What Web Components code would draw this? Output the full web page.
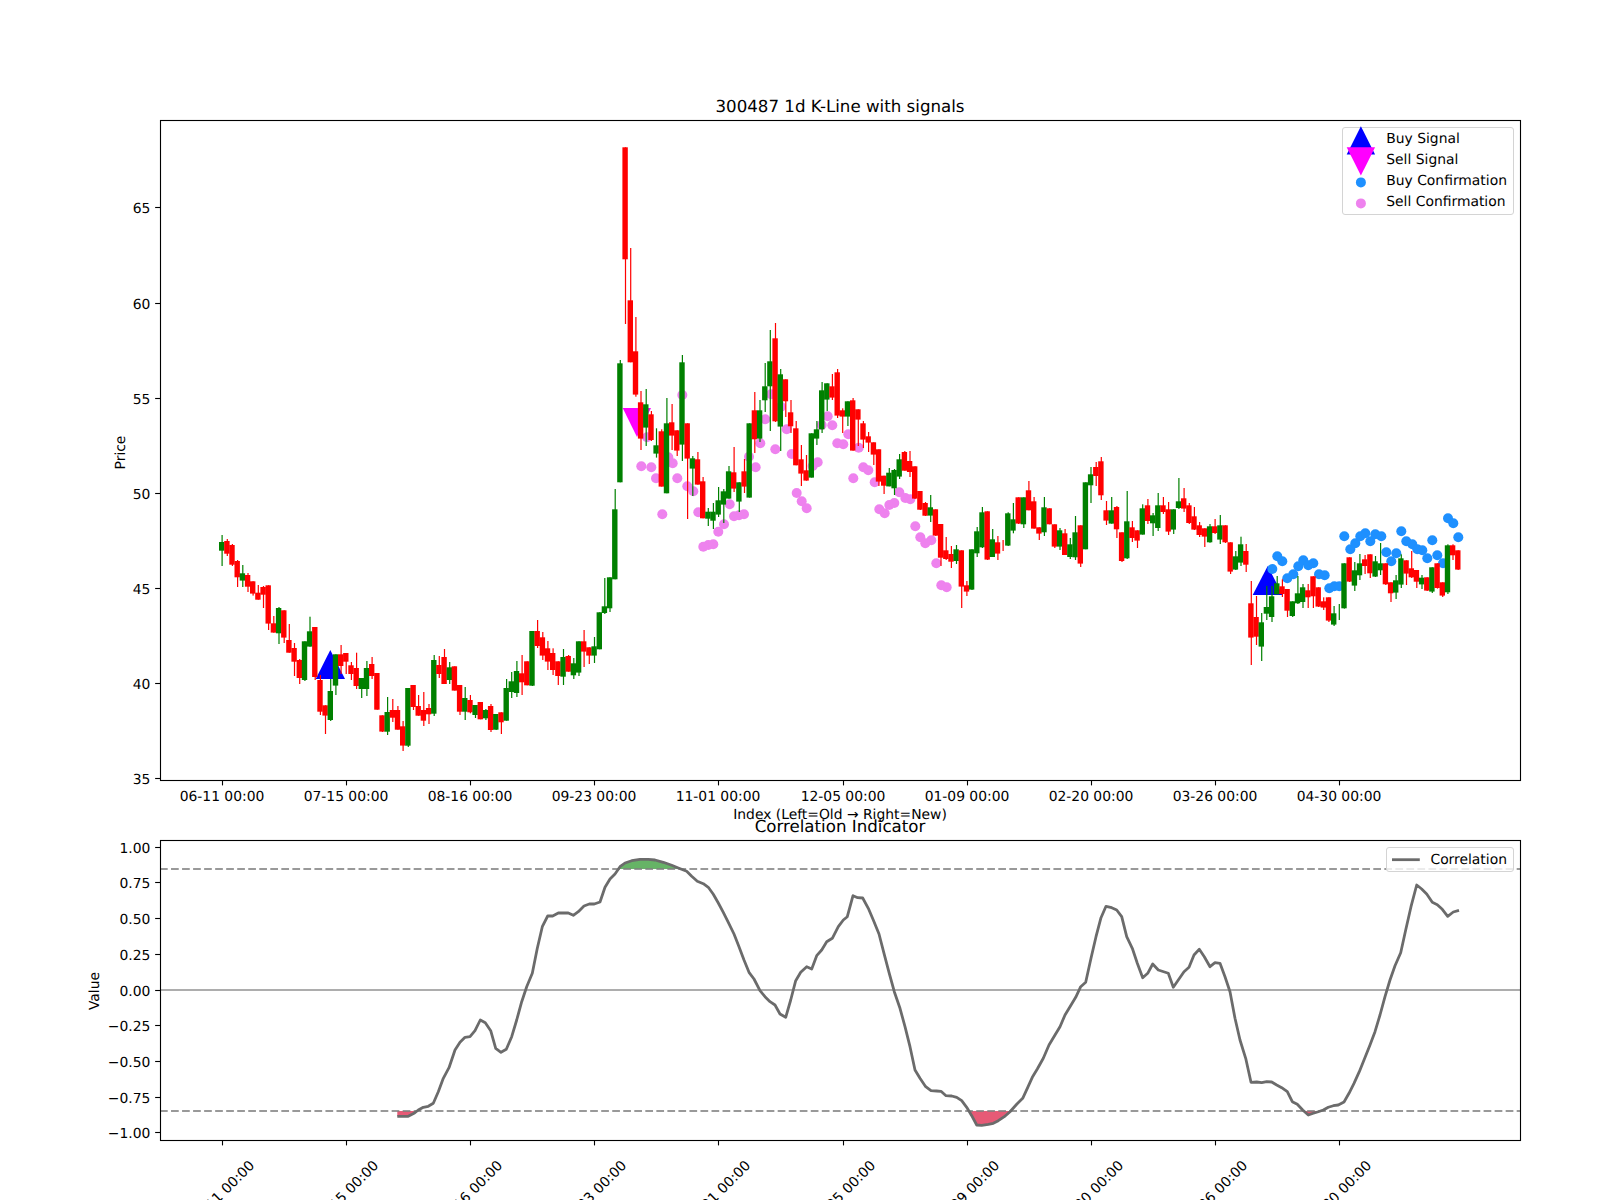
<!DOCTYPE html>
<html>
<head>
<meta charset="utf-8">
<title>300487 1d K-Line with signals</title>
<style>
	html, body { margin: 0; background: #fff; overflow: hidden; }
	body { font-family: "DejaVu Sans", sans-serif; color: #000; }
</style>
</head>
<body>
<mpl-figure>
	<kline-axes>
		<chart-legend slot="legend">
			<legend-item marker="up" color="#0000ff">Buy Signal</legend-item>
			<legend-item marker="down" color="#ff00ff">Sell Signal</legend-item>
			<legend-item marker="dot" color="#1e90ff">Buy Confirmation</legend-item>
			<legend-item marker="dot" color="#ee82ee">Sell Confirmation</legend-item>
		</chart-legend>
	</kline-axes>
	<corr-axes>
		<chart-legend slot="legend" style="padding-top: 2px; padding-bottom: 0;">
			<legend-item marker="line" color="#6b6b6b">Correlation</legend-item>
		</chart-legend>
	</corr-axes>
</mpl-figure>

<script>
// candle rows: colour, body top, body bottom, wick top, wick bottom
// y values are read at 3x, each block has its own y origin
const CANDLE_BLOCKS = [
	[480, `g 186 212 165 258
r 183 221 177 228
r 195 254 192 258
r 243 292 240 321
g 280 302 255 321
r 285 320 279 336
r 304 341 304 347
r 338 359 315 359
r 321 344 318 384
r 316 431 316 450
r 430 458 408 458
g 384 460 381 492
r 391 473 391 489
r 480 518 432 518
r 504 545 489 588
r 540 594 537 612
g 484 600 484 603
g 454 500 410 500
r 441 591 441 600
r 600 695 585 705
r 676 707 676 762
g 633 720 597 723
g 523 617 523 645
r 523 558 495 582
r 519 545 519 582
r 556 582 546 600
r 564 618 518 627
g 594 627 594 654
g 564 627 543 648
r 552 588 531 597
r 579 689 579 689
r 706 755 706 756
g 696 755 651 765
r 690 713 657 726
r 690 749 678 749
r 739 797 723 813
g 624 797 624 801
r 615 681 615 690
r 678 707 645 707
r 690 722 636 738
r 684 703 672 732
g 540 701 525 708
r 555 582 528 594
r 531 612 507 612
g 562 600 546 612`],
	[480, `r 559 632 559 632
r 615 695 615 705
g 654 695 621 720
r 660 697 645 700
g 675 705 675 714
r 666 718 666 718
g 690 715 687 720
r 678 750 672 756
g 702 749 702 750
r 697 727 697 762
g 624 722 597 722
g 604 636 576 654
g 573 639 543 651
r 580 607 525 645
r 544 616 544 616
g 453 617 453 618
r 453 498 420 504
r 472 527 456 540
r 505 545 483 570
r 519 570 505 585
r 544 588 544 615
g 531 590 507 615
r 528 575 525 575
g 550 586 534 597
g 484 578 484 588
r 484 515 450 561
r 502 527 502 552
g 499 527 471 549
g 397 508 397 508
g 379 399 294 402
g 292 385 292 396
g 88 298 27 298`],
	[130, `g 700 1057 690 1057
r 52 388 52 582
r 511 697 354 697
r 664 794 561 800
r 817 926 783 960
g 823 893 777 948
r 853 930 843 933
g 946 971 895 983
r 904 1070 898 1070
g 880 1090 804 1090
r 877 917 822 960
r 901 962 901 978
g 697 944 675 993
r 880 986 880 1167
g 985 1016 978 1098
r 988 1064 966 1064
r 1054 1165 1041 1165
g 1145 1166 1134 1188
g 1145 1172 1119 1197
g 1111 1154 1071 1161
g 1084 1124 1077 1179
g 1024 1106 1008 1106
r 1027 1076 951 1086
g 1057 1115 1057 1146
r 1024 1070 987 1089
g 880 1103 880 1103
r 841 928 786 969
g 841 926 810 936
g 769 811 699 846
g 694 769 600 903
r 625 874 579 876
g 733 890 717 963
r 748 814 748 861
r 847 889 810 909
r 895 1006 873 1006
r 988 1031 945 1068
r 1021 1052 975 1052
g 910 1043 910 1043
g 898 926 873 945
g 781 898 756 909
g 760 809 760 843
r 769 803 732 810
r 727 857 717 864
r 841 860 835 909
g 814 860 814 888
r 811 962 804 962
r 838 869 838 948
r 880 929 873 954
r 919 938 906 966
r 937 974 937 1005
r 958 1055 958 1068`],
	[320, `r 467 497 467 522
g 458 499 444 499
g 450 505 447 525
g 418 470 402 477
r 396 452 393 452
r 423 456 393 471
r 439 536 439 537
r 513 569 513 570
r 549 587 546 588
g 562 587 525 606
r 568 647 568 648
r 612 713 612 738
r 691 717 651 720
r 702 725 678 744
g 688 723 675 732
r 691 800 691 864
r 796 815 783 828
g 688 809 688 810
g 634 700 621 711
g 577 682 561 684
r 574 719 574 720
g 658 711 627 711
r 667 701 648 720
r 676 676 660 693
g 580 677 577 678
g 598 632 549 640
r 532 611 532 612
g 532 613 532 624
r 511 571 483 571
r 544 626 531 626
r 622 641 622 660
g 562 637 531 648
r 565 613 565 613
r 613 680 613 684
g 631 680 624 690
r 640 705 627 705
g 673 711 654 717
g 637 712 588 720`],
	[440, `r 256 371 256 381
g 127 328 127 328
g 103 136 81 189
r 81 108 66 138
r 64 166 51 180
r 211 242 183 255
g 211 251 171 251
r 201 268 198 294
r 277 363 277 366
g 244 355 153 357
r 262 294 243 306
r 271 302 271 324
g 205 284 193 284
r 196 243 177 252
g 226 250 219 288
g 196 264 159 273
r 196 216 171 222
r 208 275 186 285
g 208 269 208 282
g 184 204 114 207
r 175 206 144 216
r 196 249 189 252
r 229 269 201 270
r 256 285 246 291
r 265 290 265 321
g 259 307 252 308
r 259 279 237 282
g 256 299 225 312
r 256 307 256 309
r 307 395 307 402
g 349 389 333 390`],
	[490, `g 163 218 140 228
r 183 224 162 246
r 340 443 273 525
r 381 440 318 465
g 397 470 369 513
g 351 371 288 390
g 319 381 288 396
g 280 313 258 313
r 289 312 268 321
r 297 362 297 381
g 334 378 334 381
g 310 340 258 342
g 292 336 282 354
r 301 322 282 354
r 259 319 259 354
r 292 350 292 351
r 334 353 322 360
r 322 392 322 396
g 370 404 348 408
g 366 366 342 390
g 220 355 220 356
r 202 275 202 276
g 241 287 216 303
g 220 256 192 270
r 208 228 195 252
r 193 250 193 264
g 214 260 198 261
g 220 241 159 255
r 220 283 220 285
r 277 310 277 336
g 271 308 255 327
g 205 284 193 294
r 211 251 211 285
r 235 262 183 264
r 240 275 240 294
g 263 283 255 297
r 262 302 262 303
g 232 305 232 309
r 220 294 220 296
r 277 317 277 321
g 166 307 163 312
r 166 196 163 210
r 181 239 181 240`]
];

// circles, as x,y at 3x from the same crops
const SELL_DOTS = [
	[580, 130, `307,795 184,1009 214,1012 228,1045 201,922 265,982 278,1000 292,1045 322,1069 340,1084 247,1153 355,1147 449,1123 432,1183 462,1159 477,1156 492,1153 415,1205 507,980 527,1012 541,940 556,868 573,793 586,958 603,830`],
	[450, 480, `775,195 790,193 760,200`],
	[780, 320, `20,328 35,402 50,519 65,544 80,565 98,438 113,427 125,315 143,289 157,316 172,370 190,373 205,343 220,475 236,383 250,442 265,451 284,487 298,568 314,580 328,555 343,549 358,517 376,534 391,538 406,619 421,652 436,670 454,661 469,730 484,796 500,802`]
];
const BUY_DOTS = [
	[1240, 490, `97,237 112,199 127,214 142,265 160,253 175,229 190,211 205,226 220,220 237,253 254,256 268,295 283,289 298,289 313,139 331,178 346,160 361,139 376,130 391,154 406,133 424,139 439,187 454,214 469,190 484,124 499,154 517,163 532,178 547,181 562,205 577,151 592,196 609,220 624,85 640,100 655,142`]
];

// correlation line in the three lower crops
const CORR_LINE = [
	[60, 770, `1012,1039 1045,1039 1062,1030 1075,1020 1090,1012 1105,1009 1120,1000 1135,965 1150,925 1167,893 1185,840 1200,817 1215,802 1230,800 1245,782 1261,750 1276,758 1292,782 1307,835 1323,847 1339,838 1355,800 1370,750 1385,695 1400,650 1417,610 1432,535 1447,470 1463,438 1478,438 1495,429`],
	[560, 770, `25,429 40,436 55,425 72,408 88,402 103,402 120,396 135,352 150,327 165,312 180,290 195,279 215,272 240,268 265,268 285,270 310,277 335,286 355,294 380,304 395,319 412,334 430,341 445,352 460,373 475,399 490,427 505,457 522,492 537,530 552,570 567,607 582,627 600,662 615,680 630,695 645,705 660,732 677,742 692,690 707,632 722,607 740,590 755,597 770,557 785,540 800,515 817,505 835,470 850,450 862,440 879,377 893,383 908,384 925,415 940,450 957,492 972,550 987,607 1003,665 1020,715 1035,770 1050,830 1065,900 1080,925 1097,950 1113,962 1130,963 1143,964 1158,977 1175,978 1190,982 1205,992 1220,1012 1235,1037 1250,1065 1265,1066 1285,1063 1300,1060 1315,1052 1333,1040 1350,1025 1370,1003 1388,985 1402,955 1417,922 1432,897 1450,865 1467,825 1485,795`],
	[1060, 770, `0,770 15,735 30,710 47,682 62,650 77,637 93,565 108,500 123,443 138,409 155,413 170,420 185,440 200,500 217,535 232,580 248,623 263,610 278,582 295,600 325,610 340,652 355,630 372,605 387,592 402,555 418,538 433,560 450,590 465,578 480,580 495,620 510,665 525,745 540,810 557,865 573,937 590,936 605,938 620,935 635,936 650,945 665,953 682,965 697,995 712,1003 728,1020 745,1035 760,1030 775,1025 790,1020 805,1012 820,1007 835,1005 852,996 867,970 882,940 898,905 913,868 930,825 945,785 960,735 975,680 990,630 1005,587 1022,548 1037,480 1053,410 1070,345 1085,357 1100,372 1117,397 1132,404 1147,418 1163,439 1180,426 1197,421`]
];

const X_LABELS = ["06-11 00:00", "07-15 00:00", "08-16 00:00", "09-23 00:00", "11-01 00:00", "12-05 00:00", "01-09 00:00", "02-20 00:00", "03-26 00:00", "04-30 00:00"];
const TICK_X = [222.5, 346.5, 470.5, 594.5, 718.5, 843.5, 967.5, 1091.5, 1215.5, 1339.5];
const x0 = 221.7, xStep = 5.172;

function readPoints(blocks) {
	let pts = [];
	for (const [ox, oy, text] of blocks) {
		for (const pair of text.trim().split(/\s+/)) {
			const [x, y] = pair.split(",").map(Number);
			pts.push([ox + x / 3, oy + y / 3]);
		}
	}
	return pts;
}

function dotsSvg(blocks, color) {
	return readPoints(blocks).map(([x, y]) =>
		`<circle cx="${x.toFixed(1)}" cy="${y.toFixed(1)}" r="5" fill="${color}"/>`).join("");
}

// shared frame: box, ticks and labels. The viewBox keeps figure coordinates.
class ChartAxes extends HTMLElement {
	constructor() {
		super();
		this.attachShadow({ mode: "open" });
	}
	render(box, content) {
		const [x, y, w, h] = box;
		this.shadowRoot.innerHTML = `<style>
			:host { display: block; position: relative; width: ${w}px; height: ${h}px; }
			svg { display: block; overflow: visible; }
			text { font-family: "DejaVu Sans", sans-serif; font-size: 13.89px; fill: #000; text-rendering: geometricPrecision; }
			.title { font-size: 16.67px; }
			.legend-slot { position: absolute; top: 7px; right: 6.5px; }
		</style>
		<svg width="${w}" height="${h}" viewBox="${x} ${y} ${w} ${h}">${content}
			<rect x="${x + 0.5}" y="${y + 0.5}" width="${w}" height="${h}" fill="none" stroke="#000" stroke-width="1.11"/>
		</svg>
		<div class="legend-slot"><slot name="legend"></slot></div>`;
	}
	tickMark(x1, y1, x2, y2) {
		return `<line x1="${x1}" y1="${y1}" x2="${x2}" y2="${y2}" stroke="#000" stroke-width="1.11"/>`;
	}
	yTicks(list, fmt, toY, left) {
		return list.map((v) => {
			const y = Math.floor(toY(v)) + 0.5;
			return this.tickMark(left - 4.86, y, left + 0.5, y) +
				`<text x="${left - 9.7}" y="${y + 5}" text-anchor="end">${fmt(v)}</text>`;
		}).join("");
	}
}

class KlineAxes extends ChartAxes {
	constructor() {
		super();
		// measured tick rows
		const priceY = { 35: 778, 40: 683, 45: 588, 50: 493, 55: 398, 60: 303, 65: 207 };

		let candles = "", i = 0;
		for (const [oy, rows] of CANDLE_BLOCKS) {
			for (const row of rows.split("\n")) {
				const parts = row.trim().split(" ");
				const [bt, bb, wt, wb] = parts.slice(1).map(Number);
				const fill = parts[0] == "g" ? "#008000" : "#ff0000";
				const x = x0 + xStep * i;
				const top = oy + bt / 3, bot = oy + bb / 3;
				candles += `<rect x="${(x - 0.2).toFixed(1)}" y="${(oy + wt / 3).toFixed(1)}" width="1.2" height="${((wb - wt) / 3).toFixed(1)}" fill="${fill}"/>`;
				// a few rows only have a wick
				if (bb > bt) {
					candles += `<rect x="${(x - 2.7).toFixed(1)}" y="${top.toFixed(1)}" width="5.4" height="${(bot - top).toFixed(1)}" fill="${fill}"/>`;
				}
				i++;
			}
		}

		let xTicks = "";
		X_LABELS.forEach((label, n) => {
			const x = TICK_X[n];
			xTicks += this.tickMark(x, 780.5, x, 785.4) +
				`<text x="${x - 0.5}" y="801" text-anchor="middle">${label}</text>`;
		});

		this.render([160, 120, 1360, 660], `
			<polygon points="315.7,679 330.3,650 345,679" fill="#0000ff"/>
			<polygon points="1252.7,595 1267.7,566 1282.7,595" fill="#0000ff"/>
			<polygon points="622.7,408 651,408 637,437" fill="#ff00ff"/>
			${dotsSvg(SELL_DOTS, "#ee82ee")}
			${dotsSvg(BUY_DOTS, "#1e90ff")}
			${candles}
			${xTicks}
			${this.yTicks([35, 40, 45, 50, 55, 60, 65], (v) => v, (v) => priceY[v], 160)}
			<text class="title" x="840" y="111.7" text-anchor="middle">300487 1d K-Line with signals</text>
			<text x="840" y="819" text-anchor="middle">Index (Left=Old → Right=New)</text>
			<text x="125" y="452.5" text-anchor="middle" transform="rotate(-90 125 452.5)">Price</text>
		`);
	}
}

class CorrAxes extends ChartAxes {
	constructor() {
		super();
		const val = (v) => 990 - 142.8 * v;
		const upper = 869, lower = 1111;

		const pts = readPoints(CORR_LINE);
		const line = pts.map(([x, y]) => `${x.toFixed(1)},${y.toFixed(1)}`).join(" ");
		const first = pts[0][0].toFixed(1), last = pts[pts.length - 1][0].toFixed(1);

		let xTicks = "";
		X_LABELS.forEach((label, n) => {
			const x = TICK_X[n];
			// rotated labels run off the bottom of the figure, same as the original
			xTicks += this.tickMark(x, 1140.5, x, 1145.4) +
				`<text x="${x - 0.8}" y="1197.7" text-anchor="middle" transform="rotate(-45 ${x - 0.8} 1192.7)">${label}</text>`;
		});

		const ticks = [1, 0.75, 0.5, 0.25, 0, -0.25, -0.5, -0.75, -1];
		this.render([160, 840, 1360, 300], `
			<defs>
				<clipPath id="above"><rect x="160" y="840" width="1360" height="${upper - 840}"/></clipPath>
				<clipPath id="below"><rect x="160" y="${lower}" width="1360" height="${1140 - lower}"/></clipPath>
			</defs>
			<polygon clip-path="url(#above)" points="${line} ${last},${upper} ${first},${upper}" fill="#008000" fill-opacity="0.6"/>
			<polygon clip-path="url(#below)" points="${line} ${last},${lower} ${first},${lower}" fill="#dc143c" fill-opacity="0.7"/>
			<line x1="160" x2="1520" y1="${upper}" y2="${upper}" stroke="#808080" stroke-opacity="0.8" stroke-width="2.08" stroke-dasharray="7.7 3.33"/>
			<line x1="160" x2="1520" y1="${lower}" y2="${lower}" stroke="#808080" stroke-opacity="0.8" stroke-width="2.08" stroke-dasharray="7.7 3.33"/>
			<line x1="160" x2="1520" y1="990" y2="990" stroke="#adadad" stroke-width="2.08"/>
			<polyline points="${line}" fill="none" stroke="#6b6b6b" stroke-width="2.78" stroke-linejoin="round"/>
			${xTicks}
			${this.yTicks(ticks, (v) => v.toFixed(2).replace("-", "\u2212"), val, 160)}
			<text class="title" x="840" y="831.7" text-anchor="middle">Correlation Indicator</text>
			<text x="99" y="991" text-anchor="middle" transform="rotate(-90 99 991)">Value</text>
		`);
	}
}

class ChartLegend extends HTMLElement {
	constructor() {
		super();
		this.attachShadow({ mode: "open" }).innerHTML = `<style>
			:host {
				display: block;
				box-sizing: border-box;
				background: rgba(255, 255, 255, 0.8);
				border: 1px solid #d4d4d4;
				border-radius: 3px;
				padding: 1px 5.55px 1.4px 4.6px;
				font-size: 13.89px;
				line-height: 20.83px;
			}
		</style><slot></slot>`;
	}
}

class LegendItem extends HTMLElement {
	constructor() {
		super();
		const color = this.getAttribute("color");
		const shapes = {
			up: `<polygon points="-14.2,15.2 0,-13.2 14.2,15.2" fill="${color}"/>`,
			down: `<polygon points="-14.2,-13.2 14.2,-13.2 0,15.2" fill="${color}"/>`,
			dot: `<circle cx="0" cy="1" r="5" fill="${color}"/>`,
			line: `<line x1="-13.9" x2="13.9" y1="-0.7" y2="-0.7" stroke="${color}" stroke-width="2.78"/>`
		};
		this.attachShadow({ mode: "open" }).innerHTML = `<style>
			:host { display: flex; gap: 11.1px; height: 21px; text-rendering: geometricPrecision; }
			svg { width: 27.8px; height: 20.83px; overflow: visible; flex: none; }
		</style>
		<svg viewBox="-13.9 -10.4 27.8 20.83">${shapes[this.getAttribute("marker")]}</svg>
		<slot></slot>`;
	}
}

class MplFigure extends HTMLElement {
	constructor() {
		super();
		this.attachShadow({ mode: "open" }).innerHTML = `<style>
			:host {
				display: flex;
				flex-direction: column;
				gap: 60px;
				box-sizing: border-box;
				width: 1600px;
				height: 1200px;
				padding: 120px 80px 0 160px;
				overflow: hidden;
				background: #fff;
			}
		</style><slot></slot>`;
	}
}

customElements.define("chart-legend", ChartLegend);
customElements.define("legend-item", LegendItem);
customElements.define("kline-axes", KlineAxes);
customElements.define("corr-axes", CorrAxes);
customElements.define("mpl-figure", MplFigure);
</script>
</body>
</html>
